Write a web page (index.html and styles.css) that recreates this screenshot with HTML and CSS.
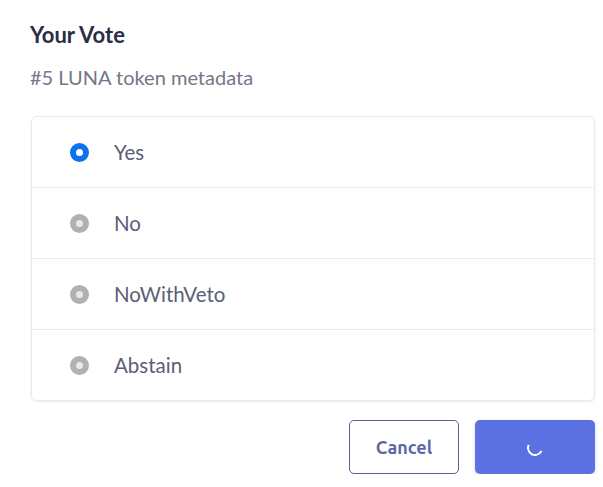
FILE: index.html
```html
<!DOCTYPE html>
<html>
<head>
<meta charset="utf-8">
<link rel="stylesheet" href="styles.css">
</head>
<body>
<div class="modal">
  <h2 class="title">Your Vote</h2>
  <p class="subtitle">#5 LUNA token metadata</p>
  <div class="options">
    <label class="option"><span class="radio checked"></span><span class="label">Yes</span></label>
    <label class="option"><span class="radio"></span><span class="label">No</span></label>
    <label class="option"><span class="radio"></span><span class="label">NoWithVeto</span></label>
    <label class="option"><span class="radio"></span><span class="label">Abstain</span></label>
  </div>
  <div class="actions">
    <button class="btn btn-outline">Cancel</button>
    <button class="btn btn-primary"><span class="spinner"></span></button>
  </div>
</div>
</body>
</html>
```
FILE: styles.css
```css
html, body {
  margin: 0;
  padding: 0;
  background: #ffffff;
}
body {
  font-family: "Lato", "Open Sans", sans-serif;
}
.modal {
  padding: 22px 8px 0 30px;
  display: flex;
  flex-direction: column;
}
.title {
  margin: 0;
  font-size: 22px;
  line-height: 26px;
  font-weight: 700;
  color: #2b2c45;
}
.subtitle {
  margin: 17px 0 0 0;
  font-size: 20px;
  line-height: 24px;
  color: #737786;
}
.options {
  margin-top: 27px;
  margin-left: 1px;
  border: 1px solid #e9e9ec;
  border-radius: 6px;
  box-shadow: 0 1px 3px rgba(0,0,0,0.08);
  display: flex;
  flex-direction: column;
}
.option {
  height: 70px;
  display: flex;
  align-items: center;
  padding-left: 38px;
  gap: 25px;
  border-top: 1px solid #ececef;
}
.option:first-child {
  border-top: none;
}
.radio {
  width: 19px;
  height: 19px;
  border-radius: 50%;
  box-sizing: border-box;
  border: 6.5px solid #b1b1b3;
  background: #e9e9ea;
}
.radio.checked {
  border-color: #0d72f0;
  background: #ffffff;
}
.label {
  font-size: 20.5px;
  color: #5b6075;
}
.actions {
  margin-top: 19px;
  display: flex;
  justify-content: flex-end;
  gap: 16px;
}
.btn {
  height: 54px;
  border-radius: 5px;
  font-family: "Ubuntu", "Open Sans", sans-serif;
  font-size: 18px;
  font-weight: 700;
  display: flex;
  align-items: center;
  justify-content: center;
  cursor: pointer;
}
.btn-outline {
  width: 110px;
  background: #ffffff;
  border: 1px solid #5a608f;
  color: #5b66a6;
}
.btn-primary {
  width: 120px;
  background: #5b70e1;
  border: none;
  box-shadow: 0 2px 4px rgba(60,70,160,0.2);
}
.spinner {
  width: 16px;
  height: 16px;
  box-sizing: border-box;
  border-radius: 50%;
  border: 2px solid transparent;
  border-bottom-color: #ffffff;
  border-left-color: #ffffff;
  transform: rotate(-20deg);
  margin-top: 2px;
}
```
